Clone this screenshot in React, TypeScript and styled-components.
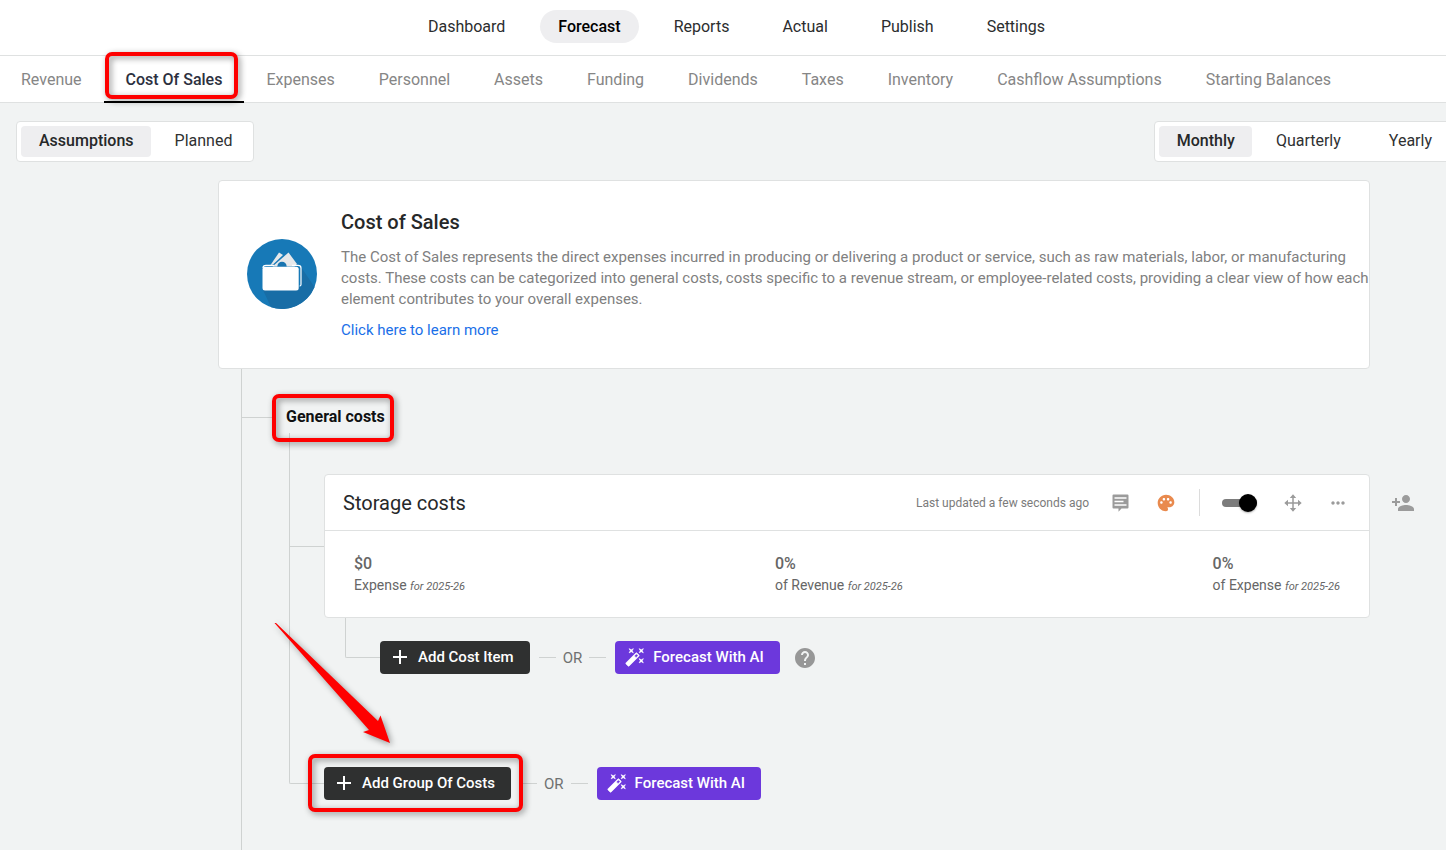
import React from "react";
import styled, { createGlobalStyle, css } from "styled-components";
import { MdAdd, MdHelp, MdMoreHoriz, MdPalette, MdPersonAdd } from "react-icons/md";

const GlobalStyle = createGlobalStyle`
  *, *::before, *::after { box-sizing: border-box; }
  body {
    margin: 0;
    overflow-x: hidden;
    background: #f1f3f3;
    font-family: Roboto, "Liberation Sans", sans-serif;
    font-size: 16px;
    color: #262829;
  }
  button { font-family: inherit; cursor: pointer; }
  h1, h2, h3, p, dl, dd, dt { margin: 0; }
`;

const line = "#cfd2d1";
const border = "#dfe1e1";

const Page = styled.div`
  display: flex;
  flex-direction: column;
  min-height: 100vh;
  overflow: hidden;
`;

const TopNav = styled.nav`
  display: flex;
  justify-content: center;
  align-items: center;
  gap: 17px;
  padding: 10px 0 12px 27px;
  background: #fff;
  border-bottom: 1px solid ${border};
`;

const TopLink = styled.a<{ $active?: boolean }>`
  padding: 0 18px;
  line-height: 33px;
  border-radius: 17px;
  text-decoration: none;
  color: ${(p) => (p.$active ? "#000" : "#2b2d2e")};
  font-weight: ${(p) => (p.$active ? 500 : 400)};
  background: ${(p) => (p.$active ? "#eeeef0" : "transparent")};
`;

const SubNav = styled.nav`
  display: flex;
  background: #fff;
  box-shadow: inset 0 -1px 0 ${border};
`;

const SubLink = styled.a<{ $active?: boolean }>`
  position: relative;
  padding: 0 22px;
  line-height: 47px;
  text-decoration: none;
  white-space: nowrap;
  color: #868686;
  &:first-child { padding-left: 21px; }
  ${(p) =>
    p.$active &&
    css`
      color: #2c3040;
      font-weight: 500;
      box-shadow: inset 0 -2px 0 #000;
    `}
`;

const Highlight = styled.span<{ $inset: string }>`
  position: absolute;
  inset: ${(p) => p.$inset};
  border: 4px solid #fe0000;
  border-radius: 7px;
  filter: drop-shadow(2px 2px 3px rgba(0, 0, 0, 0.45));
  pointer-events: none;
`;

const Toolbar = styled.div`
  display: flex;
  justify-content: space-between;
  padding: 18px 0 18px 16px;
  margin-right: -8px;
`;

const Segments = styled.div`
  display: flex;
  padding: 4px;
  background: #fff;
  border: 1px solid ${border};
  border-radius: 4px;
`;

const Segment = styled.button<{ $active?: boolean }>`
  height: 31px;
  padding: 0 24px 2px;
  border: 0;
  border-radius: 4px;
  font-size: 16px;
  color: #2f3132;
  background: transparent;
  &:last-child { padding-right: 17px; }
  ${(p) =>
    p.$active &&
    css`
      padding: 0 17px 2px 18px;
      font-weight: 500;
      color: #262829;
      background: #eeeef0;
    `}
`;

const Intro = styled.section`
  display: flex;
  align-items: center;
  gap: 24px;
  margin: 0 76px 0 218px;
  padding: 27px 0 28px 28px;
  background: #fff;
  border: 1px solid ${border};
  border-radius: 4px;
  > svg { flex: none; }
`;

const IntroTitle = styled.h1`
  font-size: 20px;
  font-weight: 500;
  line-height: 28px;
`;

const IntroText = styled.p`
  margin: 11px 0 10px;
  font-size: 15px;
  line-height: 21px;
  color: #808080;
`;

const LearnMore = styled.a`
  font-size: 15px;
  line-height: 20px;
  color: #1a6fe8;
  text-decoration: none;
`;

const Tree = styled.main`
  flex: 1;
  margin-left: 241px;
  padding: 32px 0 48px;
  border-left: 1px solid ${line};
`;

const Connector = styled.span`
  flex: none;
  width: 34px;
  height: 1px;
  background: ${line};
`;

const BranchHead = styled.div`
  display: flex;
  align-items: center;
  gap: 10px;
  height: 32px;
`;

const BranchTitle = styled.h2`
  position: relative;
  font-size: 16px;
  font-weight: 700;
  line-height: 32px;
  color: #101112;
`;

const Branch = styled.div`
  margin-left: 47px;
  padding: 41px 0 70px;
  border-left: 1px solid ${line};
`;

const CardRow = styled.div`
  display: flex;
  align-items: center;
`;

const Card = styled.article`
  flex: 1;
  background: #fff;
  border: 1px solid ${border};
  border-radius: 4px;
`;

const CardHead = styled.header`
  display: flex;
  align-items: center;
  height: 56px;
  padding: 0 9px 0 18px;
  border-bottom: 1px solid ${border};
`;

const CardTitle = styled.h3`
  flex: 1;
  font-size: 20px;
  font-weight: 400;
`;

const Updated = styled.span`
  margin-right: 9px;
  font-size: 12px;
  color: #7b7b7b;
`;

const IconButton = styled.button<{ $color?: string }>`
  display: flex;
  justify-content: center;
  align-items: center;
  width: 45px;
  height: 45px;
  padding: 0;
  border: 0;
  background: transparent;
  color: ${(p) => p.$color ?? "#9b9b9b"};
`;

const Rule = styled.span`
  width: 1px;
  height: 27px;
  margin: 0 22px 0 11px;
  background: #dcdcdc;
`;

const Switch = styled.input`
  appearance: none;
  display: flex;
  align-items: center;
  justify-content: flex-end;
  width: 35px;
  height: 8px;
  margin: 0 13px 0 0;
  border-radius: 4px;
  background: #7c7c7c;
  cursor: pointer;
  &::after {
    content: "";
    flex: none;
    width: 18px;
    height: 18px;
    border-radius: 50%;
    background: #000;
    box-shadow: 0 1px 2px rgba(0, 0, 0, 0.3);
  }
`;

const Stats = styled.dl`
  display: flex;
  justify-content: space-between;
  padding: 22px 29px 20px;
  color: #666;
`;

const StatValue = styled.dt`
  font-weight: 500;
  line-height: 22px;
`;

const StatLabel = styled.dd`
  font-size: 14px;
  line-height: 21px;
  em { font-size: 11px; }
`;

const Side = styled.div`
  align-self: flex-start;
  display: flex;
  justify-content: center;
  width: 76px;
  padding: 6px 10px 0 0;
`;

const ActionRow = styled.div<{ $indent: number }>`
  position: relative;
  display: flex;
  align-items: flex-end;
  height: 56px;
  margin-left: ${(p) => p.$indent}px;
`;

const Elbow = styled.span`
  align-self: stretch;
  flex: none;
  width: 35px;
  margin-bottom: 16px;
  border: solid ${line};
  border-width: 0 0 1px 1px;
  border-radius: 0 0 0 2px;
`;

const ActionButton = styled.button<{ $ai?: boolean }>`
  position: relative;
  display: flex;
  align-items: center;
  gap: 6px;
  height: 33px;
  padding: 0 16px 2px 8px;
  border: 0;
  border-radius: 4px;
  font-size: 15px;
  font-weight: 500;
  white-space: nowrap;
  color: #fff;
  background: ${(p) => (p.$ai ? "#6c38dc" : "#2f3030")};
`;

const IconSlot = styled.span`
  display: flex;
  justify-content: center;
  width: 24px;
`;

const Or = styled.span`
  display: flex;
  align-items: center;
  gap: 7px;
  height: 33px;
  margin: 0 9px;
  font-size: 15px;
  color: #6f7171;
  &::before, &::after {
    content: "";
    width: 17px;
    height: 1px;
    background: ${line};
  }
`;

const HelpButton = styled.button`
  display: flex;
  align-items: center;
  height: 33px;
  margin-left: 13px;
  padding: 0;
  border: 0;
  background: transparent;
  color: #979797;
`;

const Arrow = styled.svg`
  position: absolute;
  left: -18px;
  top: -124px;
  overflow: visible;
  filter: drop-shadow(2px 2px 3px rgba(0, 0, 0, 0.4));
  pointer-events: none;
`;

const WalletIcon = () => (
  <svg width="70" height="70" viewBox="0 0 70 70" aria-hidden="true">
    <circle cx="35" cy="35" r="35" fill="#1779b7" />
    <path d="M16 51 L24 68.2 A35 35 0 0 0 67.5 48 L54 28 L54 48 Z" fill="#186da6" />
    <path d="M23.5 26 L32 13.5 L36 16 L26 25.5 Z" fill="#e6e8ea" />
    <path d="M25.5 27.5 L41.5 13.5 L50 25 L47.5 27.5 Z" fill="#e6e8ea" />
    <circle cx="35" cy="27.3" r="4.6" fill="#1874b0" />
    <path
      d="M16 29 Q16 26.4 19 26.4 H27 M45 26.4 H51 Q54 26.4 54 29 V45.5 Q54 47 52.6 47"
      fill="none"
      stroke="#fff"
      strokeWidth="1.2"
    />
    <rect x="15.5" y="27.8" width="36.2" height="23.7" rx="2.5" fill="#fff" />
  </svg>
);

const CommentIcon = () => (
  <svg width="18" height="18" viewBox="0 0 18 18" aria-hidden="true">
    <path
      d="M1.5 0.5h14a1 1 0 0 1 1 1v12a1 1 0 0 1-1 1h-6l-3 3.2v-3.2h-5a1 1 0 0 1-1-1v-12a1 1 0 0 1 1-1z"
      fill="currentColor"
    />
    <path d="M2.5 4h12M2.5 7.5h9M2.5 11h12" stroke="#fff" strokeWidth="1.4" />
  </svg>
);

const MoveIcon = () => (
  <svg width="18" height="18" viewBox="0 0 18 18" aria-hidden="true">
    <path d="M9 2.5v13M2.5 9h13" stroke="currentColor" strokeWidth="1.5" />
    <path
      d="M9 0.3l3.2 3.7H5.8zM9 17.7l3.2-3.7H5.8zM0.3 9l3.7-3.2v6.4zM17.7 9l-3.7-3.2v6.4z"
      fill="currentColor"
    />
  </svg>
);

const WandIcon = () => (
  <svg width="20" height="20" viewBox="0 0 24 24" aria-hidden="true">
    <path
      fill="currentColor"
      stroke="currentColor"
      strokeWidth="0.8"
      d="M7.5,5.6L5,7L6.4,4.5L5,2L7.5,3.4L10,2L8.6,4.5L10,7L7.5,5.6M19.5,15.4L22,14L20.6,16.5L22,19L19.5,17.6L17,19L18.4,16.5L17,14L19.5,15.4M22,2L20.6,4.5L22,7L19.5,5.6L17,7L18.4,4.5L17,2L19.5,3.4L22,2M13.34,12.78L15.78,10.34L13.66,8.22L11.22,10.66L13.34,12.78M14.37,7.29L16.71,9.63C17.1,10 17.1,10.65 16.71,11.04L5.04,22.71C4.65,23.1 4,23.1 3.63,22.71L1.29,20.37C0.9,20 0.9,19.35 1.29,18.96L12.96,7.29C13.35,6.9 14,6.9 14.37,7.29Z"
    />
  </svg>
);

const topLinks = ["Dashboard", "Forecast", "Reports", "Actual", "Publish", "Settings"];
const subLinks = [
  "Revenue",
  "Cost Of Sales",
  "Expenses",
  "Personnel",
  "Assets",
  "Funding",
  "Dividends",
  "Taxes",
  "Inventory",
  "Cashflow Assumptions",
  "Starting Balances",
];
const stats = [
  { value: "$0", label: "Expense" },
  { value: "0%", label: "of Revenue" },
  { value: "0%", label: "of Expense" },
];

const AiButton = () => (
  <ActionButton type="button" $ai>
    <IconSlot>
      <WandIcon />
    </IconSlot>
    Forecast With AI
  </ActionButton>
);

export default function App() {
  return (
    <Page>
      <GlobalStyle />
      <TopNav>
        {topLinks.map((name) => (
          <TopLink key={name} href="#" $active={name === "Forecast"}>
            {name}
          </TopLink>
        ))}
      </TopNav>
      <SubNav>
        {subLinks.map((name) => (
          <SubLink key={name} href="#" $active={name === "Cost Of Sales"}>
            {name}
            {name === "Cost Of Sales" && <Highlight $inset="-4px 6px 4px 1px" />}
          </SubLink>
        ))}
      </SubNav>
      <Toolbar>
        <Segments>
          <Segment type="button" $active>Assumptions</Segment>
          <Segment type="button">Planned</Segment>
        </Segments>
        <Segments>
          <Segment type="button" $active>Monthly</Segment>
          <Segment type="button">Quarterly</Segment>
          <Segment type="button">Yearly</Segment>
        </Segments>
      </Toolbar>
      <Intro>
        <WalletIcon />
        <div>
          <IntroTitle>Cost of Sales</IntroTitle>
          <IntroText>
            The Cost of Sales represents the direct expenses incurred in producing or delivering a
            product or service, such as raw materials, labor, or manufacturing costs. These costs
            can be categorized into general costs, costs specific to a revenue stream, or
            employee-related costs, providing a clear view of how each element contributes to your
            overall expenses.
          </IntroText>
          <LearnMore href="#">Click here to learn more</LearnMore>
        </div>
      </Intro>
      <Tree>
        <BranchHead>
          <Connector />
          <BranchTitle>
            General costs
            <Highlight $inset="-7px -9px -9px -14px" />
          </BranchTitle>
        </BranchHead>
        <Branch>
          <CardRow>
            <Connector />
            <Card>
              <CardHead>
                <CardTitle>Storage costs</CardTitle>
                <Updated>Last updated a few seconds ago</Updated>
                <IconButton type="button" aria-label="Comments">
                  <CommentIcon />
                </IconButton>
                <IconButton type="button" aria-label="Colour" $color="#e98a4e">
                  <MdPalette size={20} />
                </IconButton>
                <Rule />
                <Switch type="checkbox" defaultChecked aria-label="Enabled" />
                <IconButton type="button" aria-label="Move">
                  <MoveIcon />
                </IconButton>
                <IconButton type="button" aria-label="More">
                  <MdMoreHoriz size={20} />
                </IconButton>
              </CardHead>
              <Stats>
                {stats.map((s) => (
                  <div key={s.label}>
                    <StatValue>{s.value}</StatValue>
                    <StatLabel>
                      {s.label} <em>for 2025-26</em>
                    </StatLabel>
                  </div>
                ))}
              </Stats>
            </Card>
            <Side>
              <IconButton type="button" aria-label="Add person">
                <MdPersonAdd size={24} />
              </IconButton>
            </Side>
          </CardRow>
          <ActionRow $indent={55}>
            <Elbow />
            <ActionButton type="button">
              <IconSlot>
                <MdAdd size={24} />
              </IconSlot>
              Add Cost Item
            </ActionButton>
            <Or>OR</Or>
            <AiButton />
            <HelpButton type="button" aria-label="Help">
              <MdHelp size={24} />
            </HelpButton>
          </ActionRow>
        </Branch>
        <ActionRow $indent={47}>
          <Elbow />
          <ActionButton type="button">
            <IconSlot>
              <MdAdd size={24} />
            </IconSlot>
            Add Group Of Costs
            <Highlight $inset="-13px -12px -12px -16px" />
          </ActionButton>
          <Or>OR</Or>
          <AiButton />
          <Arrow width="120" height="122" viewBox="0 0 120 122" aria-hidden="true">
            <path
              d="M3.5 3 L5 3 L107 101 L109.5 95.5 L119 123 L92 112 L98 110 Z"
              fill="#fe0000"
            />
          </Arrow>
        </ActionRow>
      </Tree>
    </Page>
  );
}
